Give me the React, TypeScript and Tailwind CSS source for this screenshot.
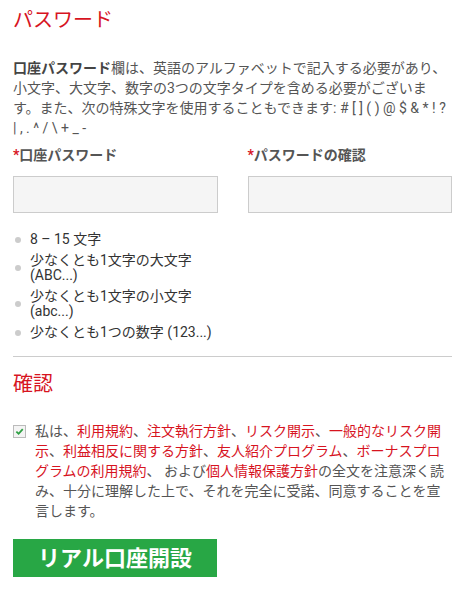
import React from 'react';

const red = 'text-[#d7141f]';

const Check: React.FC = () => (
  <span className="mt-[4px] flex h-[13px] w-[13px] shrink-0 items-center justify-center border border-[#bbbbbb] bg-[#f4f4f4]">
    <svg viewBox="0 0 10 10" className="h-[9px] w-[9px]">
      <path d="M1.5 5.2 L4 7.5 L8.6 2.4" fill="none" stroke="#2ea043" strokeWidth="2" />
    </svg>
  </span>
);

const Field: React.FC<{ label: string; children?: React.ReactNode }> = ({ label, children }) => (
  <div>
    <label className="block leading-[20px] font-bold text-[#555]">
      <span className={red}>*</span>
      {label}
    </label>
    <input type="password" className="mt-[11px] block h-[37px] w-full border border-[#cccccc] bg-[#f5f5f5] outline-none" />
    {children}
  </div>
);

const App: React.FC = () => {
  const rules = ['8 – 15 文字', '少なくとも1文字の大文字 (ABC...)', '少なくとも1文字の小文字 (abc...)', '少なくとも1つの数字 (123...)'];

  return (
    <div className="min-h-[591px] bg-white pt-[5px] pr-[20px] pl-[13px] text-[14px] text-[#555]" style={{ fontFamily: 'Roboto, "Noto Sans CJK JP", sans-serif' }}>
      <h2 className={`text-[20px] leading-[30px] font-normal ${red}`}>パスワード</h2>

      <p className="mt-[23px] leading-[20px]">
        <b className="font-bold text-[#444]">口座パスワード</b>欄は、英語のアルファベットで記入する必要があり、小文字、大文字、数字の3つの文字タイプを含める必要がございます。また、次の特殊文字を使用することもできます: # [ ] ( ) @ $ &amp; * ! ? | , . ^ / \ + _ -
      </p>

      <div className="mt-[7px] grid grid-cols-2 gap-[30px]">
        <Field label="口座パスワード">
          <ul className="mt-[19px] flex flex-col gap-[6px] text-[#333]">
            {rules.map((r) => (
              <li key={r} className="flex items-center gap-[9px] leading-[15px]">
                <span className="ml-[2px] h-[6px] w-[6px] shrink-0 rounded-full bg-[#cccccc]" />
                <span>{r}</span>
              </li>
            ))}
          </ul>
        </Field>
        <Field label="パスワードの確認" />
      </div>

      <hr className="mt-[16px] border-t border-[#cccccc]" />

      <h2 className={`mt-[12px] text-[20px] leading-[30px] font-normal ${red}`}>確認</h2>

      <div className="mt-[22px] flex items-start gap-[9px]">
        <Check />
        <p className="leading-[20px]">
          私は、<span className={red}>利用規約</span>、<span className={red}>注文執行方針</span>、<span className={red}>リスク開示</span>、<span className={red}>一般的なリスク開示</span>、<span className={red}>利益相反に関する方針</span>、<span className={red}>友人紹介プログラム</span>、<span className={red}>ボーナスプログラムの利用規約</span>、 および<span className={red}>個人情報保護方針</span>の全文を注意深く読み、十分に理解した上で、それを完全に受諾、同意することを宣言します。
        </p>
      </div>

      <button className="mt-[18px] flex h-[38px] w-[204px] items-center justify-center bg-[#28a745] text-[22px] font-bold text-white">
        リアル口座開設
      </button>
    </div>
  );
};

export default App;
